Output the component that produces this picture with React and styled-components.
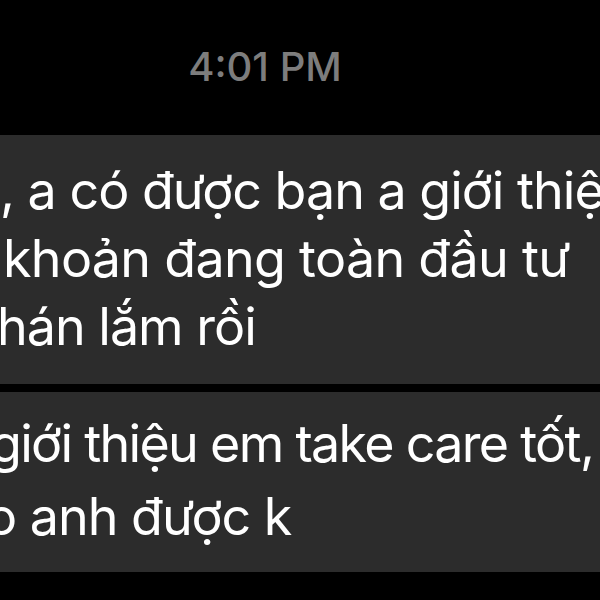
import React from 'react';
import styled, { createGlobalStyle } from 'styled-components';

const GlobalStyle = createGlobalStyle`
  html, body {
    margin: 0;
    padding: 0;
    background: #000;
  }
  body {
    font-family: Inter, "Noto Sans", "Liberation Sans", sans-serif;
    -webkit-font-smoothing: antialiased;
  }
`;

const Screen = styled.div`
  width: 600px;
  height: 600px;
  overflow: hidden;
  background: #000;
  display: flex;
  flex-direction: column;
`;

const Timestamp = styled.div`
  padding: 43px 70px 0 0;
  margin-bottom: 44px;
  text-align: center;
  font-size: 40px;
  line-height: 48px;
  font-weight: 500;
  color: #7d7d7d;
`;

const Thread = styled.div`
  display: flex;
  flex-direction: column;
  gap: 8px;
`;

const Bubble = styled.div`
  background: #2c2c2c;
  color: #fff;
  padding: ${(p) => p.$pad};
  font-size: 52px;
  line-height: ${(p) => p.$lh}px;
  overflow: hidden;
`;

const Line = styled.div`
  white-space: nowrap;
  margin-left: ${(p) => p.$shift || 0}px;
  letter-spacing: ${(p) => p.$tracking ?? -1}px;
`;

const messages = [
  {
    pad: '22px 0 23px',
    lh: 68,
    lines: [
      { text: ', a có được bạn a giới thiệu', shift: 0 },
      { text: 'khoản đang toàn đầu tư', shift: 3, tracking: -0.7 },
      { text: 'hán lắm rồi', shift: -3 },
    ],
  },
  {
    pad: '15px 0 19px',
    lh: 73,
    lines: [
      { text: 'giới thiệu em take care tốt,', shift: -10, tracking: -1.7 },
      { text: 'o anh được k', shift: -14 },
    ],
  },
];

export default function App() {
  return (
    <>
      <GlobalStyle />
      <Screen>
        <Timestamp>4:01 PM</Timestamp>
        <Thread>
          {messages.map((m, i) => (
            <Bubble key={i} $pad={m.pad} $lh={m.lh}>
              {m.lines.map((l, j) => (
                <Line key={j} $shift={l.shift} $tracking={l.tracking}>
                  {l.text}
                </Line>
              ))}
            </Bubble>
          ))}
        </Thread>
      </Screen>
    </>
  );
}
